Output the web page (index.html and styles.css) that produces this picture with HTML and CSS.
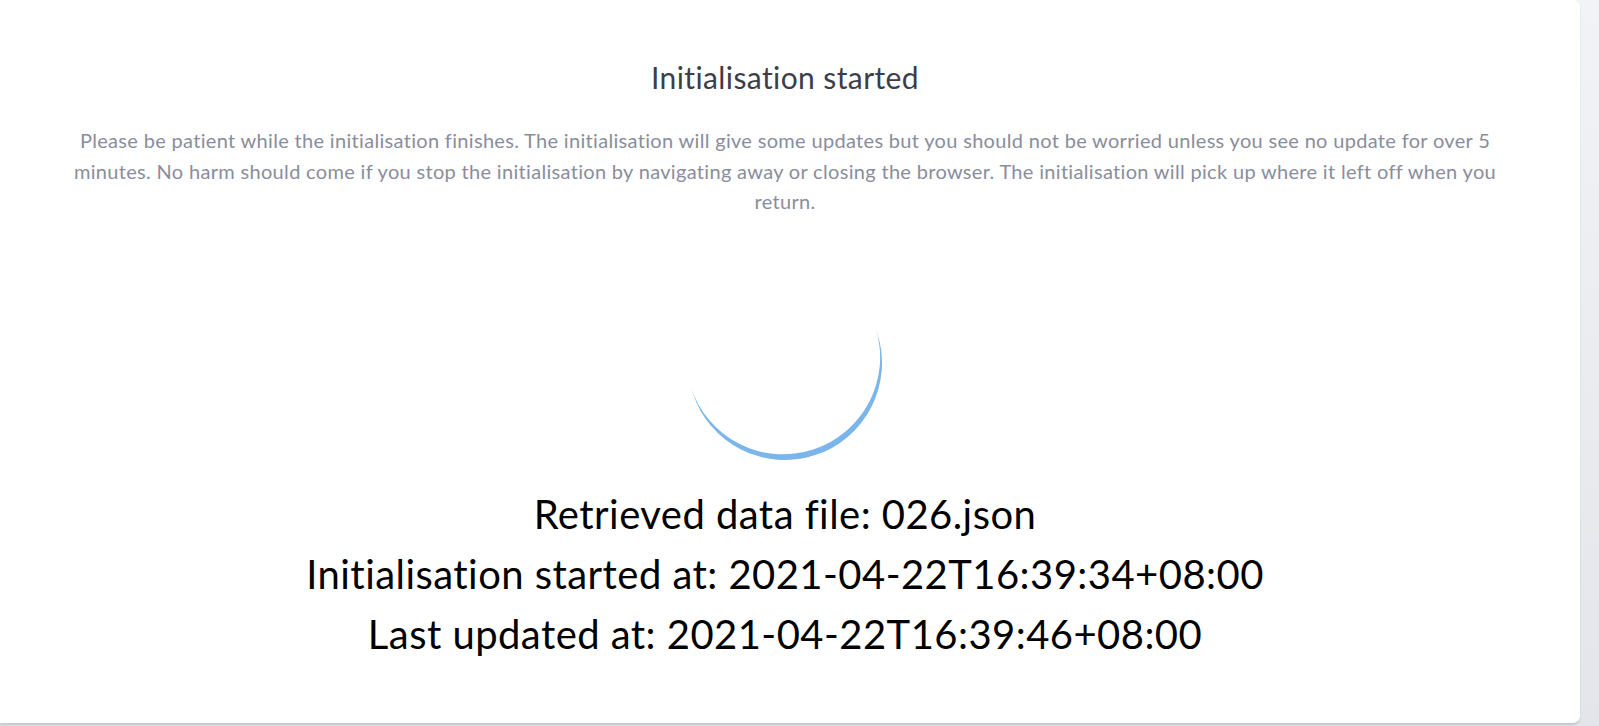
FILE: index.html
```html
<!DOCTYPE html>
<html lang="en">
<head>
<meta charset="utf-8">
<title>Initialisation</title>
<link rel="stylesheet" href="styles.css">
</head>
<body>
<main class="card">
  <h2 class="title">Initialisation started</h2>
  <p class="intro">Please be patient while the initialisation finishes. The initialisation will give some updates but you should not be worried unless you see no update for over 5 minutes. No harm should come if you stop the initialisation by navigating away or closing the browser. The initialisation will pick up where it left off when you return.</p>
  <div class="spinner-wrap"><div class="spinner"></div></div>
  <div class="status">
    <div class="status-line">Retrieved data file: 026.json</div>
    <div class="status-line">Initialisation started at: 2021-04-22T16:39:34+08:00</div>
    <div class="status-line">Last updated at: 2021-04-22T16:39:46+08:00</div>
  </div>
</main>
</body>
</html>
```

FILE: styles.css
```css
html, body {
  margin: 0;
  padding: 0;
  height: 726px;
  overflow: hidden;
}
body {
  background: linear-gradient(to bottom, #f2f3f6, #e4e5ea);
  font-family: "Lato", "Noto Sans", sans-serif;
}
.card {
  box-sizing: border-box;
  width: 1580px;
  height: 723px;
  background: #ffffff;
  border-radius: 0 7px 7px 0;
  box-shadow: 0 2px 2px rgba(0, 0, 0, 0.13);
  padding: 59px 70px 0 60px;
  display: flex;
  flex-direction: column;
  align-items: center;
  text-align: center;
}
.title {
  margin: 0;
  font-size: 30px;
  line-height: 36px;
  font-weight: 400;
  letter-spacing: 0.4px;
  color: #3b3e48;
}
.intro {
  margin: 30px 0 0;
  font-size: 20px;
  line-height: 30.5px;
  letter-spacing: 0.32px;
  color: #8a8d9c;
}
.spinner-wrap {
  margin-top: 49px;
  width: 194px;
  height: 194px;
}
.spinner {
  width: 194px;
  height: 194px;
  border-radius: 50%;
  box-shadow: inset 0 -6px 0 0 #7ab6ec;
  transform: rotate(-18deg);
}
.status {
  margin-top: 24px;
  font-size: 40px;
  line-height: 60px;
  letter-spacing: 0.45px;
  color: #000000;
}
```
